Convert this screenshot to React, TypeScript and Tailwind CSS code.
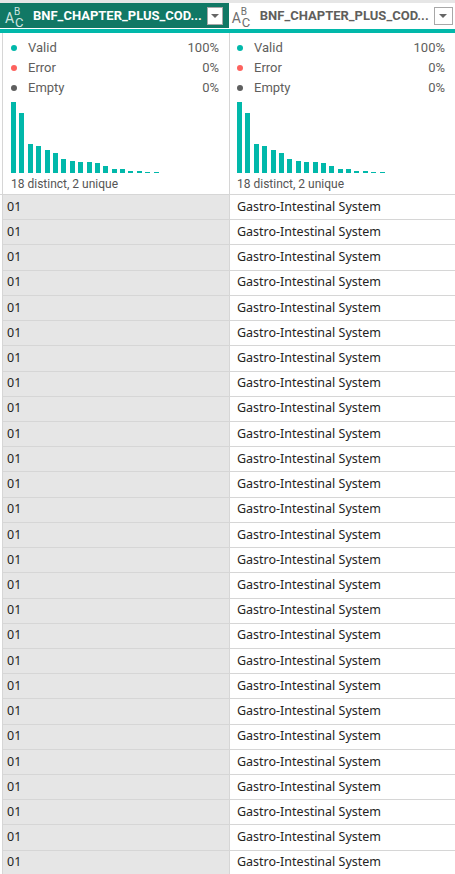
import React from "react";

const bars = [71, 60, 29, 27, 23, 20, 14, 12, 11, 11, 10, 7, 4, 4, 2, 2, 1, 1];
const rows = Array.from({ length: 28 });

function AbcIcon({ color }: { color: string }) {
  return (
    <div className="relative w-[24px] h-[24px] shrink-0" style={{ color }}>
      <span className="absolute left-[1px] top-[7px] text-[14px] leading-none font-['Roboto',sans-serif]">A</span>
      <span className="absolute left-[10px] top-[3px] text-[10px] leading-none font-['Roboto',sans-serif]">B</span>
      <span className="absolute left-[11px] top-[12px] text-[13px] leading-none font-['Roboto',sans-serif]">C</span>
    </div>
  );
}

function Dropdown({ w }: { w: string }) {
  return (
    <div className={`${w} h-[18px] bg-white border border-[#a8a8a8] flex items-center justify-center shrink-0`}>
      <svg width="8" height="4" viewBox="0 0 8 4">
        <path d="M0 0 L8 0 L4 4 Z" fill="#666" />
      </svg>
    </div>
  );
}

function Profile({ pad }: { pad: string }) {
  return (
    <div className={`flex flex-col pt-[5px] ${pad} font-['Roboto',sans-serif] text-[13px] text-[#605e5c]`}>
      <div className="flex flex-col pl-[8px]">
        {[
          ["Valid", "100%", "#01b8aa"],
          ["Error", "0%", "#fd625e"],
          ["Empty", "0%", "#5f5f5f"],
        ].map(([l, v, c]) => (
          <div key={l} className="h-[20px] flex items-center">
            <span className="w-[6px] h-[6px] rounded-full mr-[11px]" style={{ background: c }} />
            <span className="flex-1">{l}</span>
            <span>{v}</span>
          </div>
        ))}
      </div>
      <div className="h-[75px] flex items-end gap-[3.4px] pl-[8px]">
        {bars.map((h, i) => (
          <div key={i} className="w-[5px] bg-[#01b8aa]" style={{ height: h }} />
        ))}
      </div>
      <div className="h-[21px] flex items-center pl-[8px] text-[12px] text-[#555]">18 distinct, 2 unique</div>
    </div>
  );
}

export default function App() {
  return (
    <div className="w-[455px] h-[874px] overflow-hidden bg-white font-['Noto_Sans',sans-serif]">
      <div className="h-[3px] bg-[#e6e6e6]" />
      <div className="flex h-[25px]">
        <div className="w-[229px] bg-[#117865] flex items-center pl-[4px] pr-[6px] gap-[5px]">
          <AbcIcon color="#cfe6e1" />
          <span className="flex-1 text-white font-bold text-[13px] font-['Roboto',sans-serif] whitespace-nowrap">BNF_CHAPTER_PLUS_COD...</span>
          <Dropdown w="w-[16px]" />
        </div>
        <div className="w-[1px] bg-[#d0d0d0]" />
        <div className="flex-1 flex items-center pl-[2px] pr-[3px] gap-[5px]">
          <AbcIcon color="#6e6e6e" />
          <span className="flex-1 text-[#605e5c] font-bold text-[13px] font-['Roboto',sans-serif] whitespace-nowrap">BNF_CHAPTER_PLUS_COD...</span>
          <Dropdown w="w-[19px]" />
        </div>
      </div>
      <div className="h-[1px] bg-white" />
      <div className="h-[4px] bg-[#01b8aa]" />
      <div className="flex pl-[2px] border-b border-[#d6d6d6]">
        <div className="w-[227px] border-l border-[#d6d6d6]">
          <Profile pad="pr-[10px]" />
        </div>
        <div className="w-[1px] bg-[#d6d6d6]" />
        <div className="flex-1">
          <Profile pad="pr-[10px] -ml-[1px]" />
        </div>
      </div>
      <div className="flex pl-[2px]">
        <div className="w-[227px] border-l border-[#d6d6d6] bg-[#e6e6e6]">
          {rows.map((_, i) => (
            <div key={i} className="h-[25.23px] border-b border-[#d6d6d6] flex items-center pl-[4px] text-[12.5px] text-[#252423]">01</div>
          ))}
        </div>
        <div className="w-[1px] bg-[#d6d6d6]" />
        <div className="flex-1">
          {rows.map((_, i) => (
            <div key={i} className="h-[25.23px] border-b border-[#d6d6d6] flex items-center pl-[7px] text-[12.5px] text-[#252423]">Gastro-Intestinal System</div>
          ))}
        </div>
      </div>
    </div>
  );
}
